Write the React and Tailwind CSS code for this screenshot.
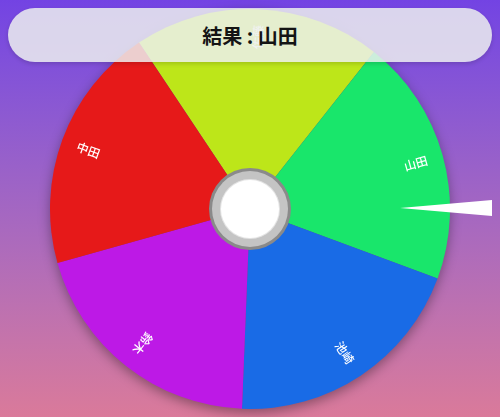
import React from "react";

// ルーレットの項目（上から時計回り）
const items = [
  { name: "佐藤", color: "hsl(72, 80%, 50%)" },
  { name: "山田", color: "hsl(144, 80%, 50%)" },
  { name: "池崎", color: "hsl(216, 80%, 50%)" },
  { name: "鈴木", color: "hsl(288, 80%, 50%)" },
  { name: "中田", color: "hsl(0, 80%, 50%)" },
];

const R = 200;
const OFFSET = -33.7; // wheel rotation

const pt = (deg, r) => {
  const a = (deg * Math.PI) / 180;
  return [R + r * Math.sin(a), R - r * Math.cos(a)];
};

function Wheel() {
  const step = 360 / items.length;
  return (
    <svg width="400" height="400" viewBox="0 0 400 400" className="drop-shadow-[0_4px_6px_rgba(0,0,0,0.35)]">
      {items.map((item, i) => {
        const start = OFFSET + i * step;
        const end = start + step;
        const [x1, y1] = pt(start, R);
        const [x2, y2] = pt(end, R);
        return (
          <path
            key={item.name}
            d={`M${R},${R} L${x1},${y1} A${R},${R} 0 0 1 ${x2},${y2} Z`}
            fill={item.color}
          />
        );
      })}
      {items.map((item, i) => {
        const mid = OFFSET + i * step + step / 2;
        const [x, y] = pt(mid, 172);
        let rot = mid - 90;
        let norm = ((rot % 360) + 360) % 360;
        if (norm > 180 && norm < 270) norm -= 180; // 読みやすく反転
        return (
          <text
            key={item.name + "-label"}
            x={x}
            y={y}
            fill="white"
            fontSize="12"
            fontWeight="500"
            textAnchor="middle"
            dominantBaseline="central"
            transform={`rotate(${norm} ${x} ${y})`}
            style={{ fontFamily: '"Noto Sans CJK JP", sans-serif' }}
          >
            {item.name}
          </text>
        );
      })}
      {/* center cap */}
      <circle cx={R} cy={R} r="41" fill="#8a8a8a" />
      <circle cx={R} cy={R} r="38" fill="#c4c4c4" />
      <circle cx={R} cy={R} r="30" fill="#e4e4e4" />
      <circle cx={R} cy={R} r="29" fill="#ffffff" />
    </svg>
  );
}

export default function App() {
  return (
    <div className="relative w-[500px] h-[417px] overflow-hidden bg-gradient-to-b from-[#7343e3] to-[#da7a9a]">
      <div className="flex h-full w-full items-center justify-center pt-px">
        <Wheel />
      </div>

      {/* pointer */}
      <svg className="absolute left-[400px] top-[199px]" width="92" height="18" viewBox="0 0 92 18">
        <polygon points="0,9 92,1 92,17" fill="white" />
      </svg>

      {/* result bar */}
      <div className="absolute left-2 right-2 top-2 flex h-[54px] items-center justify-center rounded-full bg-[#eceeee]/85 shadow-[0_2px_4px_rgba(0,0,0,0.15)]">
        <span
          className="pt-0.5 text-[20px] font-bold text-[#141414]"
          style={{ fontFamily: '"Noto Sans CJK JP", sans-serif' }}
        >
          結果 : 山田
        </span>
      </div>
    </div>
  );
}
